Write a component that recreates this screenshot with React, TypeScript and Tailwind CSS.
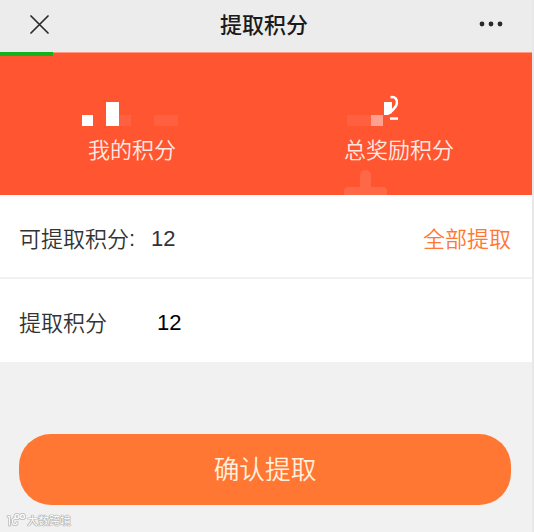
import React from "react";

const digits = "font-['Liberation_Sans','Noto_Sans_CJK_SC',sans-serif]";

function Header() {
  return (
    <header className="flex h-[52px] items-center justify-between bg-[#ececec] pb-[4px] pl-[30px] pr-[29px]">
      <svg width="19" height="19" viewBox="0 0 19 19" fill="none" stroke="#292929" strokeWidth="1.7" strokeLinecap="round">
        <path d="M1 1 18 18M18 1 1 18" />
      </svg>
      <h1 className="mb-[3px] text-[22px] font-medium leading-[32px] text-[#1b1b1b]">提取积分</h1>
      <svg width="24" height="6" viewBox="0 0 24 6" fill="#292929">
        <circle cx="3" cy="3" r="2.4" />
        <circle cx="12" cy="3" r="2.4" />
        <circle cx="21" cy="3" r="2.4" />
      </svg>
    </header>
  );
}

function Summary() {
  return (
    <section className="relative h-[143px] overflow-hidden bg-[#ff5530]">
      <div className="h-px bg-[#ff9a82]" />
      <div className="absolute left-0 top-0 h-[4px] w-[53px] bg-[#11b31b]" />
      <div className="grid grid-cols-2 text-center text-[22px] font-[350] leading-[32px] text-[#ffeae1]">
        <div className="flex flex-col items-center pr-[2px] pt-[42px]">
          <svg width="110" height="37" viewBox="77 95 110 37" shapeRendering="crispEdges">
            <rect x="82" y="115" width="11" height="11" fill="#fff" />
            <rect x="106" y="102" width="13" height="24" fill="#fff" />
            <rect x="119" y="115" width="12" height="11" fill="#ff6040" />
            <rect x="154" y="115" width="24" height="11" fill="#ff6040" />
          </svg>
          <span>我的积分</span>
        </div>
        <div className="flex flex-col items-center pt-[42px]">
          <svg width="110" height="37" viewBox="344 95 110 37">
            <rect x="347" y="115" width="24" height="11" fill="#ff6040" />
            <rect x="371" y="115" width="12" height="11" fill="#ffa190" />
            <path d="M384 102h8v11l-4 2h-4z" fill="#fff" />
            <path d="M390.5 97.2C395.5 96.3 397.7 99.5 396.8 103.5C396.2 107 393.5 109.5 390.5 112" fill="none" stroke="#fff" strokeWidth="2.6" />
            <path d="M390 117.3h8v2.500h-8z" fill="#fff" />
          </svg>
          <span>总奖励积分</span>
        </div>
      </div>
      <svg className="absolute bottom-0 left-[344px]" width="43" height="25" viewBox="0 0 43 25" fill="#ff6847">
        <path d="M0 25v-4q0-4 4-4h12V6q0-6 5.500-6T27 6v11h12q4 0 4 4v4z" />
      </svg>
    </section>
  );
}

function Watermark() {
  return (
    <div className="flex h-[16px] items-center gap-[1px] pl-[6px] text-[#f8f8f8]">
      <svg width="20" height="14" viewBox="0 0 20 14" fill="none" strokeLinecap="round" strokeLinejoin="round">
        <g stroke="#b9b9b9" strokeWidth="3">
          <path d="M2 3.500h1.500V12M10 5.500H8.500q-2 0-2 3t2 3h1q1.500 0 1.500-2" />
          <circle cx="11" cy="3.500" r="2" />
          <circle cx="16.500" cy="3.500" r="2" />
        </g>
        <g stroke="#f7f7f7" strokeWidth="1.500">
          <path d="M2 3.500h1.500V12M10 5.500H8.500q-2 0-2 3t2 3h1q1.500 0 1.500-2" />
          <circle cx="11" cy="3.500" r="2" />
          <circle cx="16.500" cy="3.500" r="2" />
        </g>
      </svg>
      <span className="text-[11px] font-medium leading-[16px] [text-shadow:0_0_1px_#888,0_0_1px_#999,0_0_1px_#aaa]">大数跨境</span>
    </div>
  );
}

export default function App() {
  return (
    <div className="h-[532px] w-[534px] bg-[#e8e8e8] font-['Noto_Sans_CJK_SC',sans-serif]">
      <main className="flex h-full w-[532px] flex-col bg-[#f1f1f1]">
        <Header />
        <Summary />
        <section className="bg-white text-[22px] leading-[32px] text-[#333]">
          <div className="flex h-[84px] items-center border-b-2 border-[#f1f1f1] pl-[19px] pr-[21px] pt-[5px]">
            <span className="mb-[4px] font-[350]">可提取积分</span>
            <span className={`${digits} w-[22px]`}>:</span>
            <span className={digits}>12</span>
            <button className="mb-[4px] ml-auto font-[350] text-[#ff7733]">全部提取</button>
          </div>
          <div className="flex h-[83px] items-center pl-[19px] pt-[5px]">
            <span className="mb-[4px] w-[138px] font-[350]">提取积分</span>
            <span className={`${digits} text-black`}>12</span>
          </div>
        </section>
        <button className="ml-[19px] mt-[72px] flex h-[71px] w-[492px] shrink-0 items-center justify-center rounded-[32px] bg-[#ff7733] pb-[2px] text-[25.700px] font-[350] text-[#fff0df]">
          确认提取
        </button>
        <div className="mt-[7px]">
          <Watermark />
        </div>
      </main>
    </div>
  );
}
